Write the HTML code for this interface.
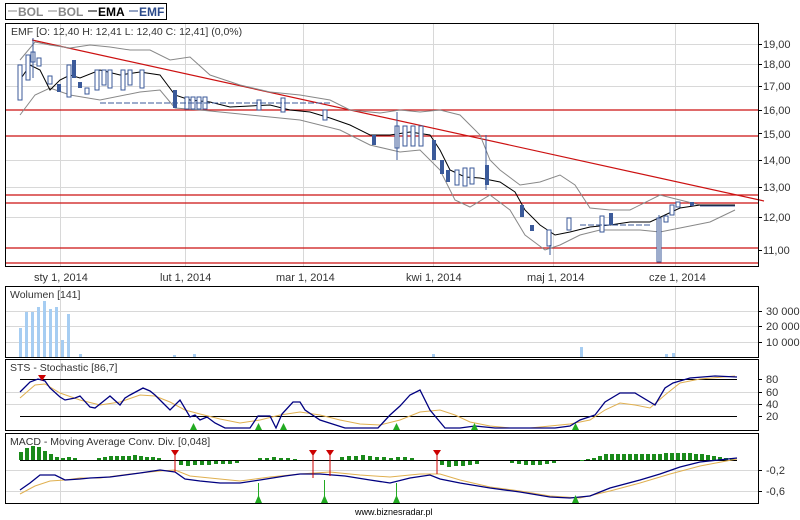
<!DOCTYPE html>
<html><head><meta charset="utf-8"><style>
body{margin:0;background:#fff;width:800px;height:520px;overflow:hidden;font-family:"Liberation Sans",sans-serif}
svg{position:absolute;left:0;top:0}
text{font-family:"Liberation Sans",sans-serif;font-size:11px;fill:#333}
</style></head><body>
<svg width="800" height="520" viewBox="0 0 800 520">
<!-- legend -->
<rect x="5.5" y="3.5" width="161" height="16" fill="#fff" stroke="#000"/>
<line x1="8" y1="11" x2="17" y2="11" stroke="#888"/><text x="18" y="16" style="fill:#888;font-weight:bold;font-size:12px">BOL</text>
<line x1="48" y1="11" x2="57" y2="11" stroke="#888"/><text x="58" y="16" style="fill:#888;font-weight:bold;font-size:12px">BOL</text>
<line x1="88" y1="11" x2="97" y2="11" stroke="#000"/><text x="98" y="16" style="fill:#000;font-weight:bold;font-size:12px">EMA</text>
<line x1="129" y1="11" x2="138" y2="11" stroke="#2b4a8a"/><text x="139" y="16" style="fill:#2b4a8a;font-weight:bold;font-size:12px">EMF</text>

<!-- main panel -->
<g stroke="#d8d8d8" stroke-width="1">
<line x1="6" y1="44.5" x2="758" y2="44.5"/><line x1="6" y1="64.5" x2="758" y2="64.5"/><line x1="6" y1="86.5" x2="758" y2="86.5"/>
<line x1="6" y1="160.5" x2="758" y2="160.5"/><line x1="6" y1="187.5" x2="758" y2="187.5"/><line x1="6" y1="217.5" x2="758" y2="217.5"/>
<line x1="60.5" y1="24" x2="60.5" y2="266"/><line x1="185.5" y1="24" x2="185.5" y2="266"/><line x1="303.5" y1="24" x2="303.5" y2="266"/>
<line x1="433.5" y1="24" x2="433.5" y2="266"/><line x1="553.5" y1="24" x2="553.5" y2="266"/><line x1="675.5" y1="24" x2="675.5" y2="266"/>
</g>
<g stroke="#cc1111" stroke-width="1.2">
<line x1="6" y1="110" x2="758" y2="110"/><line x1="6" y1="136" x2="758" y2="136"/><line x1="6" y1="195" x2="758" y2="195"/>
<line x1="6" y1="203" x2="758" y2="203"/><line x1="6" y1="248" x2="758" y2="248"/><line x1="6" y1="263" x2="758" y2="263"/>
<line x1="32" y1="40" x2="764" y2="201"/>
</g>
<!-- bollinger -->
<polyline fill="none" stroke="#888" points="20,60 35,42 50,45 70,48 90,45 110,47 130,50 150,50 170,60 190,57 210,75 240,85 270,92 300,95 330,100 350,110 380,113 400,110 420,112 440,110 460,115 480,135 490,160 500,170 520,185 540,182 560,175 575,185 590,208 610,210 630,210 660,195 680,200 700,205 735,205"/>
<polyline fill="none" stroke="#888" points="20,115 35,95 50,88 70,95 100,100 140,92 160,90 175,108 200,110 230,113 260,116 300,120 340,130 370,145 400,152 420,150 440,170 455,200 470,207 490,195 510,210 525,235 545,250 560,245 580,235 600,230 640,230 660,232 680,228 710,222 735,210"/>
<polyline fill="none" stroke="#000" points="20,80 30,65 40,70 50,90 60,80 70,75 80,78 100,70 120,75 140,72 160,75 175,95 190,100 210,102 230,107 250,106 270,105 290,110 310,112 330,118 350,125 370,135 390,135 410,132 430,135 440,150 450,170 465,177 480,178 500,182 515,192 525,210 540,225 555,235 570,232 590,227 610,225 630,222 650,222 665,215 680,208 700,205 735,205"/>
<!-- candles -->
<g fill="#fff" stroke="#3b5a9a">
<rect x="18" y="65" width="4" height="35"/><rect x="26" y="55" width="4" height="25"/><rect x="31" y="52" width="4" height="10"/><rect x="37" y="58" width="4" height="8"/>
<rect x="48" y="76" width="4" height="8"/><rect x="67" y="65" width="4" height="32"/><rect x="85" y="88" width="4" height="6"/>
<rect x="95" y="70" width="4" height="20"/><rect x="102" y="70" width="4" height="15"/><rect x="108" y="70" width="4" height="18"/><rect x="121" y="70" width="4" height="20"/><rect x="128" y="70" width="4" height="15"/><rect x="140" y="70" width="4" height="18"/>
<rect x="185" y="97" width="4" height="12"/><rect x="191" y="97" width="4" height="12"/><rect x="197" y="97" width="4" height="12"/><rect x="203" y="97" width="4" height="12"/>
<rect x="257" y="100" width="4" height="10"/><rect x="281" y="98" width="4" height="14"/><rect x="323" y="110" width="4" height="10"/>
<rect x="395" y="126" width="4" height="22"/><rect x="403" y="126" width="4" height="20"/><rect x="411" y="126" width="4" height="20"/><rect x="419" y="126" width="4" height="20"/>
<rect x="455" y="170" width="4" height="15"/><rect x="463" y="168" width="4" height="18"/><rect x="470" y="168" width="4" height="16"/>
<rect x="547" y="230" width="4" height="16"/><rect x="567" y="218" width="4" height="12"/><rect x="600" y="216" width="4" height="16"/>
<rect x="657" y="218" width="4" height="44"/><rect x="664" y="216" width="4" height="6"/><rect x="670" y="205" width="4" height="10"/><rect x="676" y="202" width="4" height="5"/>
</g>
<g fill="#3b5a9a">
<rect x="72" y="60" width="4" height="18"/><rect x="57" y="84" width="4" height="8"/><rect x="78" y="82" width="4" height="6"/><rect x="173" y="90" width="4" height="18"/>
<rect x="372" y="135" width="4" height="10"/><rect x="432" y="140" width="4" height="20"/><rect x="440" y="160" width="4" height="14"/><rect x="446" y="170" width="4" height="12"/><rect x="485" y="165" width="4" height="20"/>
<rect x="520" y="205" width="4" height="12"/><rect x="530" y="225" width="4" height="6"/><rect x="609" y="213" width="4" height="12"/><rect x="690" y="202" width="4" height="4"/>
</g>
<g stroke="#3b5a9a"><line x1="33" y1="38" x2="33" y2="78"/><line x1="397" y1="112" x2="397" y2="160"/><line x1="659" y1="215" x2="659" y2="262"/><line x1="486" y1="135" x2="486" y2="190"/><line x1="550" y1="245" x2="550" y2="255"/>
<line x1="100" y1="103" x2="330" y2="103" stroke-dasharray="6,2"/><line x1="580" y1="225" x2="650" y2="225" stroke-dasharray="6,2"/><line x1="700" y1="206" x2="735" y2="206"/></g>
<rect x="5.5" y="23.5" width="753" height="243" fill="none" stroke="#000"/>
<text x="11" y="35" style="font-size:10.5px">EMF [O: 12,40  H: 12,41  L: 12,40  C: 12,41] (0,0%)</text>
<g style="font-size:10.5px">
<text x="763" y="48">19,00</text><text x="763" y="68">18,00</text><text x="763" y="90">17,00</text><text x="763" y="114">16,00</text><text x="763" y="138">15,00</text><text x="763" y="164">14,00</text><text x="763" y="191">13,00</text><text x="763" y="221">12,00</text><text x="763" y="254">11,00</text>
<text x="34" y="281">sty 1, 2014</text><text x="160" y="281">lut 1, 2014</text><text x="276" y="281">mar 1, 2014</text><text x="406" y="281">kwi 1, 2014</text><text x="527" y="281">maj 1, 2014</text><text x="649" y="281">cze 1, 2014</text>
</g>
<g stroke="#000"><line x1="758" y1="44.5" x2="762" y2="44.5"/><line x1="758" y1="64.5" x2="762" y2="64.5"/><line x1="758" y1="86.5" x2="762" y2="86.5"/><line x1="758" y1="110.5" x2="762" y2="110.5"/><line x1="758" y1="133.5" x2="762" y2="133.5"/><line x1="758" y1="160.5" x2="762" y2="160.5"/><line x1="758" y1="187.5" x2="762" y2="187.5"/><line x1="758" y1="217.5" x2="762" y2="217.5"/><line x1="758" y1="250.5" x2="762" y2="250.5"/></g>

<!-- volume -->
<g stroke="#d8d8d8"><line x1="6" y1="311.5" x2="758" y2="311.5"/><line x1="6" y1="326.5" x2="758" y2="326.5"/><line x1="6" y1="342.5" x2="758" y2="342.5"/>
<line x1="60.5" y1="287" x2="60.5" y2="357"/><line x1="675.5" y1="287" x2="675.5" y2="357"/></g>
<g fill="#a6cdf2"><rect x="19" y="328" width="3" height="29"/><rect x="25" y="312" width="3" height="45"/><rect x="31" y="312" width="3" height="45"/><rect x="37" y="307" width="3" height="50"/><rect x="43" y="301" width="3" height="56"/><rect x="49" y="309" width="3" height="48"/><rect x="55" y="307" width="3" height="50"/><rect x="61" y="340" width="3" height="17"/><rect x="67" y="314" width="3" height="43"/><rect x="79" y="354" width="3" height="3"/><rect x="173" y="355" width="3" height="2"/><rect x="193" y="354" width="3" height="3"/><rect x="432" y="354" width="3" height="3"/><rect x="580" y="347" width="3" height="10"/><rect x="665" y="354" width="3" height="3"/><rect x="672" y="353" width="3" height="4"/></g>
<rect x="5.5" y="286.5" width="753" height="71" fill="none" stroke="#000"/>
<text x="10" y="298" style="font-size:10.5px">Wolumen [141]</text>
<g style="font-size:10.5px"><text x="766" y="315">30 000</text><text x="766" y="330">20 000</text><text x="766" y="346">10 000</text></g>
<g stroke="#000"><line x1="758" y1="311.5" x2="762" y2="311.5"/><line x1="758" y1="326.5" x2="762" y2="326.5"/><line x1="758" y1="342.5" x2="762" y2="342.5"/></g>

<!-- STS -->
<g stroke="#d8d8d8"><line x1="6" y1="392.5" x2="758" y2="392.5"/><line x1="6" y1="404.5" x2="758" y2="404.5"/><line x1="60.5" y1="360" x2="60.5" y2="430"/><line x1="675.5" y1="360" x2="675.5" y2="430"/></g>
<g stroke="#000"><line x1="20" y1="379.5" x2="737" y2="379.5"/><line x1="20" y1="416.5" x2="737" y2="416.5"/></g>
<polyline fill="none" stroke="#e0b050" points="20,398 35,385 45,384 60,393 80,400 100,405 120,402 140,395 155,396 170,402 185,410 200,414 220,419 240,423 260,420 280,415 300,412 320,415 340,420 360,424 380,425 400,420 420,412 440,410 455,415 470,422 490,426 510,428 530,428 550,426 570,424 590,420 605,410 620,403 635,405 650,408 665,395 680,383 700,379 735,376"/>
<polyline fill="none" stroke="#000080" stroke-width="1.3" points="20,392 30,382 38,379 45,381 50,388 60,397 65,400 75,398 80,396 90,407 95,408 105,400 110,396 120,405 125,398 130,395 143,388 150,391 155,395 165,405 170,410 175,405 180,400 190,417 195,415 200,420 207,417 215,423 225,428 235,428 250,428 258,416 270,416 276,428 282,414 293,402 300,402 305,410 320,420 345,428 370,428 378,428 390,415 400,406 410,395 420,390 430,410 445,428 460,428 475,426 495,428 520,428 540,428 555,428 570,426 580,420 595,415 605,402 620,393 635,393 655,405 665,388 673,383 690,378 715,376 737,377"/>
<polygon points="38,375 46,375 42,381" fill="#cc0000"/>
<g fill="#22aa22"><polygon points="190,430 197,430 193.5,423"/><polygon points="255,430 262,430 258.5,423"/><polygon points="280,430 287,430 283.5,423"/><polygon points="393,430 400,430 396.5,423"/><polygon points="471,430 478,430 474.5,423"/><polygon points="572,430 579,430 575.5,423"/></g>
<rect x="5.5" y="359.5" width="753" height="71" fill="none" stroke="#000"/>
<text x="10" y="371" style="font-size:10.5px">STS - Stochastic [86,7]</text>
<g style="font-size:10.5px"><text x="766" y="383">80</text><text x="766" y="396">60</text><text x="766" y="408">40</text><text x="766" y="420">20</text></g>
<g stroke="#000"><line x1="758" y1="379.5" x2="762" y2="379.5"/><line x1="758" y1="392.5" x2="762" y2="392.5"/><line x1="758" y1="404.5" x2="762" y2="404.5"/><line x1="758" y1="416.5" x2="762" y2="416.5"/></g>

<!-- MACD -->
<g stroke="#d8d8d8"><line x1="6" y1="470.5" x2="758" y2="470.5"/><line x1="6" y1="491.5" x2="758" y2="491.5"/><line x1="60.5" y1="434" x2="60.5" y2="503"/><line x1="675.5" y1="434" x2="675.5" y2="503"/></g>
<line x1="20" y1="460.5" x2="737" y2="460.5" stroke="#000"/>
<g fill="#1a8a1a">
<rect x="19" y="452" width="4" height="8"/><rect x="25" y="448" width="4" height="12"/><rect x="31" y="446" width="4" height="14"/><rect x="37" y="447" width="4" height="13"/><rect x="43" y="451" width="4" height="9"/><rect x="49" y="454" width="4" height="6"/><rect x="55" y="457" width="4" height="3"/><rect x="61" y="458" width="4" height="2"/><rect x="67" y="457" width="4" height="3"/><rect x="73" y="458" width="4" height="2"/>
<rect x="97" y="458" width="4" height="2"/><rect x="103" y="457" width="4" height="3"/><rect x="109" y="456" width="4" height="4"/><rect x="115" y="456" width="4" height="4"/><rect x="121" y="456" width="4" height="4"/><rect x="127" y="456" width="4" height="4"/><rect x="133" y="455" width="4" height="5"/><rect x="139" y="456" width="4" height="4"/><rect x="145" y="457" width="4" height="3"/><rect x="151" y="457" width="4" height="3"/><rect x="157" y="458" width="4" height="2"/>
<rect x="179" y="461" width="4" height="4"/><rect x="186" y="461" width="4" height="5"/><rect x="193" y="461" width="4" height="4"/><rect x="200" y="461" width="4" height="4"/><rect x="207" y="461" width="4" height="4"/><rect x="214" y="461" width="4" height="3"/><rect x="221" y="461" width="4" height="3"/><rect x="228" y="461" width="4" height="3"/><rect x="235" y="461" width="4" height="2"/>
<rect x="258" y="458" width="4" height="2"/><rect x="265" y="458" width="4" height="2"/><rect x="272" y="457" width="4" height="3"/><rect x="279" y="458" width="4" height="2"/><rect x="286" y="458" width="4" height="2"/><rect x="293" y="459" width="4" height="1"/>
<rect x="340" y="457" width="4" height="3"/><rect x="347" y="456" width="4" height="4"/><rect x="354" y="456" width="4" height="4"/><rect x="361" y="455" width="4" height="5"/><rect x="368" y="456" width="4" height="4"/><rect x="375" y="457" width="4" height="3"/><rect x="382" y="457" width="4" height="3"/><rect x="389" y="458" width="4" height="2"/><rect x="396" y="457" width="4" height="3"/><rect x="403" y="457" width="4" height="3"/><rect x="410" y="458" width="4" height="2"/>
<rect x="440" y="461" width="4" height="4"/><rect x="447" y="461" width="4" height="6"/><rect x="454" y="461" width="4" height="5"/><rect x="461" y="461" width="4" height="5"/><rect x="468" y="461" width="4" height="4"/><rect x="475" y="461" width="4" height="3"/>
<rect x="510" y="461" width="4" height="2"/><rect x="517" y="461" width="4" height="3"/><rect x="524" y="461" width="4" height="4"/><rect x="531" y="461" width="4" height="4"/><rect x="538" y="461" width="4" height="4"/><rect x="545" y="461" width="4" height="3"/><rect x="552" y="461" width="4" height="2"/>
<rect x="580" y="460" width="4" height="1"/><rect x="586" y="459" width="4" height="1"/><rect x="592" y="458" width="4" height="2"/><rect x="598" y="456" width="4" height="4"/><rect x="604" y="454" width="4" height="6"/><rect x="610" y="454" width="4" height="6"/><rect x="616" y="454" width="4" height="6"/><rect x="622" y="454" width="4" height="6"/><rect x="628" y="454" width="4" height="6"/><rect x="634" y="454" width="4" height="6"/><rect x="640" y="454" width="4" height="6"/><rect x="646" y="454" width="4" height="6"/><rect x="652" y="454" width="4" height="6"/><rect x="658" y="454" width="4" height="6"/><rect x="664" y="453" width="4" height="7"/><rect x="670" y="453" width="4" height="7"/><rect x="676" y="453" width="4" height="7"/><rect x="682" y="453" width="4" height="7"/><rect x="688" y="453" width="4" height="7"/><rect x="694" y="454" width="4" height="6"/><rect x="700" y="454" width="4" height="6"/><rect x="706" y="455" width="4" height="5"/><rect x="712" y="456" width="4" height="4"/><rect x="718" y="457" width="4" height="3"/><rect x="724" y="458" width="4" height="2"/><rect x="730" y="458" width="4" height="2"/>
</g>
<polyline fill="none" stroke="#e0b050" points="20,494 35,486 50,481 65,480 80,478 100,478 130,474 160,471 175,470 190,476 210,478 240,481 270,477 300,474 330,472 360,475 390,477 420,474 440,474 460,480 490,487 520,491 550,496 580,498 610,491 640,483 670,474 700,466 737,459"/>
<polyline fill="none" stroke="#000080" stroke-width="1.3" points="20,490 30,483 40,475 55,475 65,480 80,479 90,478 110,477 140,473 160,470 175,472 185,479 200,481 220,483 240,483 260,480 285,476 300,474 320,474 345,476 370,480 390,483 410,478 430,475 440,479 460,483 490,488 520,492 550,497 570,498 590,496 610,488 640,480 660,474 680,467 700,462 737,458"/>
<g stroke="#cc0000"><line x1="175" y1="455" x2="175" y2="472"/><line x1="313" y1="455" x2="313" y2="478"/><line x1="330" y1="455" x2="330" y2="476"/><line x1="437" y1="455" x2="437" y2="474"/></g>
<g fill="#cc0000"><polygon points="171,450 179,450 175,456"/><polygon points="309,450 317,450 313,456"/><polygon points="326,450 334,450 330,456"/><polygon points="433,450 441,450 437,456"/></g>
<g stroke="#22aa22"><line x1="258.5" y1="483" x2="258.5" y2="496"/><line x1="324.5" y1="480" x2="324.5" y2="496"/><line x1="396.5" y1="483" x2="396.5" y2="496"/><line x1="575.5" y1="498" x2="575.5" y2="502"/></g>
<g fill="#22aa22"><polygon points="255,503 262,503 258.5,495"/><polygon points="321,503 328,503 324.5,495"/><polygon points="393,503 400,503 396.5,495"/><polygon points="572,503 579,503 575.5,495"/></g>
<rect x="5.5" y="433.5" width="753" height="70" fill="none" stroke="#000"/>
<text x="10" y="445" style="font-size:10.5px">MACD - Moving Average Conv. Div. [0,048]</text>
<g style="font-size:10.5px"><text x="766" y="474">-0,2</text><text x="766" y="495">-0,6</text></g>
<g stroke="#000"><line x1="758" y1="470.5" x2="762" y2="470.5"/><line x1="758" y1="491.5" x2="762" y2="491.5"/></g>

<text x="355" y="515" style="font-size:9px;fill:#000">www.biznesradar.pl</text>
</svg>
</body></html>
